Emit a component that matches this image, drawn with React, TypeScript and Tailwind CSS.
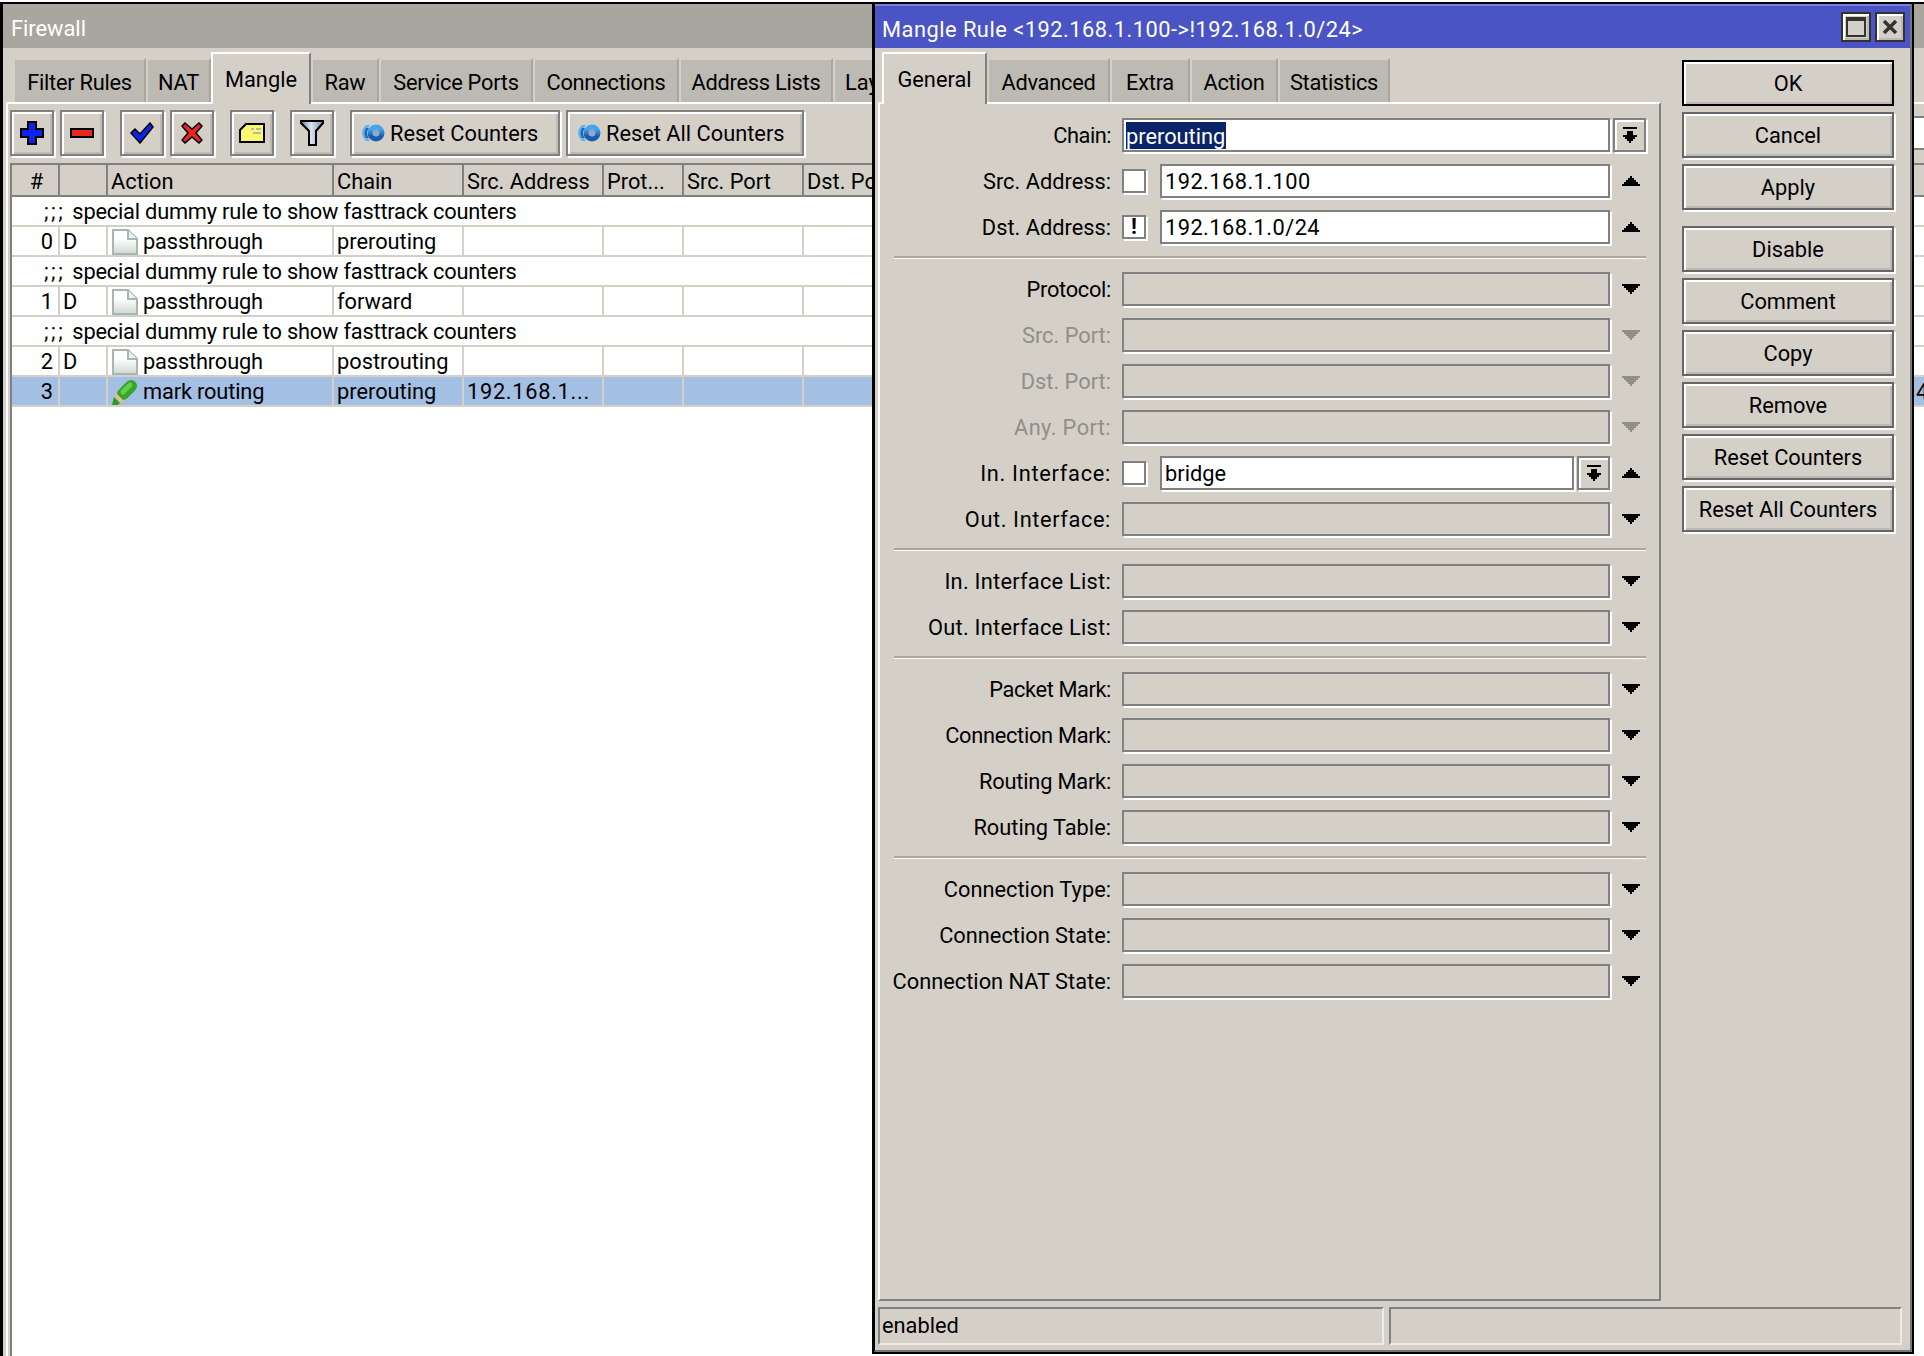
const arrowDown = "M0 0h18v2h-2v2h-2v2h-2v2h-2v2H8V8H6V6H4V4H2V2H0z";
const arrowUp = "M8 0h2v2h2v2h2v2h2v2h2v2H0V8h2V6h2V4h2V2h2z";

function Arrow({ up, muted }: { up?: boolean; muted?: boolean }) {
  return (
    <svg width="18" height="10" viewBox="0 0 18 10" className="block" fill={muted ? "#8f8f88" : "#000"}>
      <path d={up ? arrowUp : arrowDown} />
    </svg>
  );
}

function DropBtn() {
  return (
    <div className="flex h-[34px] w-[33px] items-center justify-center border-2 border-[#808080] shadow-[2px_2px_0_#fff,inset_2px_2px_0_#fff]">
      <svg width="14" height="16" viewBox="0 0 14 16" fill="#000">
        <path d="M0 0h14v2H0zM4 4h6v4h4v2h-2v2h-2v2H8v2H6v-2H4v-2H2v-2H0V8h4z" />
      </svg>
    </div>
  );
}

function ToolBtn({ className, children }: { className: string; children: React.ReactNode }) {
  return (
    <div className={"flex h-[46px] shrink-0 items-center border-2 border-[#808080] shadow-[2px_2px_0_#fff,inset_2px_2px_0_#fff,inset_-2px_-2px_0_#bdbab3] " + className}>
      {children}
    </div>
  );
}

function ResetIcon({ id }: { id: string }) {
  return (
    <svg width="26" height="18" viewBox="0 0 26 18" className="shrink-0">
      <defs>
        <linearGradient id={id} x1="0" y1="0" x2="0" y2="1">
          <stop offset="0.2" stopColor="#45a5ea" />
          <stop offset="0.75" stopColor="#1a5cab" />
        </linearGradient>
      </defs>
      <path d="M7 1Q-1 9 7 17h4Q4 9 11 1z" fill="#5fb4ee" />
      <path d="M7 4Q4 9 7 14h3Q6 9 10 4z" fill="#1f68b8" />
      <circle cx="17" cy="9" r="6" fill="#8fa8cf" stroke={`url(#${id})`} strokeWidth="5" />
    </svg>
  );
}

function DocIcon() {
  return (
    <svg width="26" height="26" viewBox="0 0 26 26" className="shrink-0">
      <defs>
        <linearGradient id="doc" x1="0" y1="0" x2="0" y2="1">
          <stop offset="0.35" stopColor="#ffffff" />
          <stop offset="1" stopColor="#cfd8d4" />
        </linearGradient>
      </defs>
      <path d="M1 1h15l9 9v15H1z" fill="url(#doc)" stroke="#a9b5b1" strokeWidth="2" />
      <path d="M16 1v9h9" fill="#eef2f0" stroke="#a9b5b1" strokeWidth="2" />
    </svg>
  );
}

function MarkerIcon() {
  return (
    <svg width="26" height="26" viewBox="0 0 26 26" className="shrink-0">
      <path d="M11 15L19 7" stroke="#35a625" strokeWidth="12" strokeLinecap="round" />
      <path d="M11 13L18 6" stroke="#62cf48" strokeWidth="5" strokeLinecap="round" />
      <path d="M4 14l8 8-3 2-7-7z" fill="#e3c08a" />
      <path d="M2 18l6 6-2 2H0z" fill="#2f9a22" />
    </svg>
  );
}

const tabs = [
  { label: "Filter Rules", w: "w-[133px]" },
  { label: "NAT", w: "w-[65px]" },
  { label: "Mangle", w: "w-[100px]", on: true },
  { label: "Raw", w: "w-[68px]" },
  { label: "Service Ports", w: "w-[154px]" },
  { label: "Connections", w: "w-[146px]" },
  { label: "Address Lists", w: "w-[154px]" },
];

const dlgTabs = [
  { label: "General", w: "w-[105px]", on: true },
  { label: "Advanced", w: "w-[123px]" },
  { label: "Extra", w: "w-[80px]" },
  { label: "Action", w: "w-[88px]" },
  { label: "Statistics", w: "w-[112px]" },
];

function Tab({ label, w, on }: { label: string; w: string; on?: boolean }) {
  if (on) {
    return (
      <div className={"relative z-10 -mb-[2px] flex h-[52px] shrink-0 items-start justify-center border-t-2 border-l-2 border-r-2 border-t-white border-l-white border-r-[#808080] bg-[#d4d0c8] pt-[15px] " + w}>
        {label}
      </div>
    );
  }
  return (
    <div className={"flex h-[44px] shrink-0 items-center justify-center overflow-hidden border-t-2 border-l-2 border-r-2 border-t-[#d4d0c8] border-l-[#d4d0c8] border-r-[#a9a6a0] bg-[#bdbab3] pt-[3px] tracking-[-0.25px] " + w}>
      <span className="whitespace-nowrap">{label}</span>
    </div>
  );
}

const cols = ["w-[48px]", "w-[48px]", "w-[226px]", "w-[130px]", "w-[140px]", "w-[80px]", "w-[120px]", "w-[120px]"];
const heads = ["#", "", "Action", "Chain", "Src. Address", "Prot...", "Src. Port", "Dst. Port"];

const rows = [
  { comment: true },
  { n: "0", d: "D", action: "passthrough", chain: "prerouting" },
  { comment: true },
  { n: "1", d: "D", action: "passthrough", chain: "forward" },
  { comment: true },
  { n: "2", d: "D", action: "passthrough", chain: "postrouting" },
  { n: "3", d: "", action: "mark routing", chain: "prerouting", src: "192.168.1...", sel: true },
];

function Row({ r }: { r: any }) {
  if (r.comment) {
    return (
      <div className="flex h-[30px] items-center whitespace-nowrap border-b-2 border-[#d4d0c8] pl-[32px] pt-[2px]">
        <span className="mr-[7px] tracking-[2.5px]">;;;</span>
        <span className="tracking-[-0.2px]">special dummy rule to show fasttrack counters</span>
      </div>
    );
  }
  const cell = "flex h-full shrink-0 items-center border-r-2 border-[#d4d0c8] px-[3px] pt-[2px] whitespace-nowrap";
  return (
    <div className={"flex h-[30px] items-center border-b-2 border-[#d4d0c8] " + (r.sel ? "bg-[#a3bfe4]" : "bg-white")}>
      <div className={cell + " justify-end pr-[5px] " + cols[0]}>{r.n}</div>
      <div className={cell + " " + cols[1]}>{r.d}</div>
      <div className={cell + " gap-[5px] pl-[4px] tracking-[-0.15px] " + cols[2]}>
        {r.sel ? <MarkerIcon /> : <DocIcon />}
        {r.action}
      </div>
      <div className={cell + " " + cols[3]}>{r.chain}</div>
      <div className={cell + " tracking-[0.7px] " + cols[4]}>{r.src}</div>
      <div className={cell + " " + cols[5]} />
      <div className={cell + " " + cols[6]} />
      <div className={cell + " " + cols[7]} />
      <div className="flex-1 pl-[992px] pt-[2px]">{r.sel ? "4" : ""}</div>
    </div>
  );
}

function Field({ label, muted, track, children }: { label: string; muted?: boolean; track?: string; children: React.ReactNode }) {
  return (
    <div className="mb-[12px] flex h-[34px] items-center">
      <div className={"w-[231px] shrink-0 whitespace-nowrap pt-[2px] text-right " + (muted ? "text-[#8f8f88] " : "") + (track || "")}>{label}</div>
      <div className="ml-[11px] flex h-full flex-1 items-center">{children}</div>
    </div>
  );
}

const box = "h-[34px] border-2 border-[#808080] shadow-[2px_2px_0_#fff]";

function EmptyField({ label, muted, track }: { label: string; muted?: boolean; track?: string }) {
  return (
    <Field label={label} muted={muted} track={track}>
      <div className={"w-[488px] " + box} />
      <div className="ml-[12px]">
        <Arrow muted={muted} />
      </div>
    </Field>
  );
}

function Sep() {
  return <div className="mb-[13px] ml-[14px] h-[3px] w-[752px] border-b border-white bg-[#a9a6a0]" />;
}

function Check({ mark }: { mark?: boolean }) {
  return (
    <div className="flex h-[24px] w-[24px] shrink-0 items-center justify-center border-2 border-[#808080] bg-white font-bold text-black shadow-[2px_2px_0_#fff]">
      {mark ? "!" : ""}
    </div>
  );
}

function SideBtn({ label, primary, className }: { label: string; primary?: boolean; className?: string }) {
  return (
    <div
      className={
        "flex h-[46px] w-[212px] items-center justify-center border-2 pt-[2px] " +
        (primary
          ? "border-black shadow-[inset_2px_2px_0_#fff,inset_-2px_-2px_0_#bdbab3] "
          : "border-[#666] shadow-[2px_2px_0_#fff,inset_2px_2px_0_#fff,inset_-2px_-2px_0_#bdbab3] ") +
        (className || "")
      }
    >
      {label}
    </div>
  );
}

function Dialog() {
  return (
    <div className="absolute left-[872px] top-[2px] h-[1352px] w-[1042px] border-x-2 border-t-2 border-b-2 border-black bg-[#d4d0c8]">
      <div className="flex h-full flex-col border-b-2 border-l border-r-2 border-b-[#777] border-l-black border-r-[#777]">
        <div className="flex h-[44px] shrink-0 items-center justify-between border-t-2 border-[#7a80dc] bg-[#4b54c5] pl-[7px] pr-[5px] text-white">
          <span className="pt-[6px] tracking-[0.5px]">{"Mangle Rule <192.168.1.100->!192.168.1.0/24>"}</span>
          <div className="flex gap-[4px]">
            <div className="flex h-[30px] w-[30px] items-center justify-center border-2 border-[#333] bg-[#d4d0c8] shadow-[inset_2px_2px_0_#fff,inset_-2px_-2px_0_#bdbab3]">
              <div className="h-[20px] w-[20px] border-2 border-t-4 border-[#333]" />
            </div>
            <div className="flex h-[30px] w-[30px] items-center justify-center border-2 border-[#333] bg-[#d4d0c8] shadow-[inset_2px_2px_0_#fff,inset_-2px_-2px_0_#bdbab3]">
              <svg width="14" height="14" viewBox="0 0 14 14" fill="none" stroke="#333" strokeWidth="3.5">
                <path d="M1 1l12 12M13 1L1 13" />
              </svg>
            </div>
          </div>
        </div>
        <div className="flex min-h-0 flex-1">
          <div className="ml-[3px] flex w-[783px] shrink-0 flex-col pt-[4px]">
            <div className="flex h-[50px] items-end pl-[4px]">
              {dlgTabs.map((t) => (
                <Tab key={t.label} {...t} />
              ))}
            </div>
            <div className="flex-1 border-t-2 border-l-2 border-r-2 border-b-2 border-t-white border-l-white border-r-[#808080] border-b-[#808080] pt-[14px]">
              <Field label="Chain:" track="tracking-[-0.5px]">
                <div className={"flex w-[488px] items-center bg-white pl-[2px] " + box}>
                  <span className="bg-[#0a246a] pr-[1px] pt-[3px] leading-[24px] text-white">prerouting</span>
                </div>
                <div className="ml-[3px]">
                  <DropBtn />
                </div>
              </Field>
              <Field label="Src. Address:">
                <Check />
                <div className={"ml-[14px] flex w-[450px] items-center bg-white pl-[3px] pt-[1px] tracking-[0.45px] " + box}>192.168.1.100</div>
                <div className="ml-[12px]">
                  <Arrow up />
                </div>
              </Field>
              <Field label="Dst. Address:">
                <Check mark />
                <div className={"ml-[14px] flex w-[450px] items-center bg-white pl-[3px] pt-[1px] tracking-[0.45px] " + box}>192.168.1.0/24</div>
                <div className="ml-[12px]">
                  <Arrow up />
                </div>
              </Field>
              <Sep />
              <EmptyField label="Protocol:" track="tracking-[-0.3px]" />
              <EmptyField label="Src. Port:" muted />
              <EmptyField label="Dst. Port:" muted />
              <EmptyField label="Any. Port:" muted track="tracking-[0.4px]" />
              <Field label="In. Interface:" track="tracking-[0.7px]">
                <Check />
                <div className={"ml-[14px] flex w-[414px] items-center bg-white pl-[3px] pt-[1px] " + box}>bridge</div>
                <div className="ml-[3px]">
                  <DropBtn />
                </div>
                <div className="ml-[12px]">
                  <Arrow up />
                </div>
              </Field>
              <EmptyField label="Out. Interface:" track="tracking-[0.6px]" />
              <Sep />
              <EmptyField label="In. Interface List:" track="tracking-[0.25px]" />
              <EmptyField label="Out. Interface List:" track="tracking-[0.25px]" />
              <Sep />
              <EmptyField label="Packet Mark:" track="tracking-[-0.4px]" />
              <EmptyField label="Connection Mark:" track="tracking-[-0.3px]" />
              <EmptyField label="Routing Mark:" track="tracking-[-0.2px]" />
              <EmptyField label="Routing Table:" />
              <Sep />
              <EmptyField label="Connection Type:" />
              <EmptyField label="Connection State:" />
              <EmptyField label="Connection NAT State:" />
            </div>
          </div>
          <div className="ml-[21px] flex flex-col gap-[6px] pt-[12px]">
            <SideBtn label="OK" primary />
            <SideBtn label="Cancel" />
            <SideBtn label="Apply" className="mb-[10px]" />
            <SideBtn label="Disable" />
            <SideBtn label="Comment" />
            <SideBtn label="Copy" />
            <SideBtn label="Remove" />
            <SideBtn label="Reset Counters" />
            <SideBtn label="Reset All Counters" />
          </div>
        </div>
        <div className="ml-[3px] mt-[6px] mb-[5px] flex h-[38px] shrink-0 gap-[5px]">
          <div className="flex w-[506px] items-center border-t-2 border-l-2 border-r-2 border-b-2 border-t-[#808080] border-l-[#808080] border-r-[#ecebe6] border-b-[#ecebe6] pl-[2px]">
            enabled
          </div>
          <div className="w-[513px] border-t-2 border-l-2 border-r-2 border-b-2 border-t-[#808080] border-l-[#808080] border-r-[#ecebe6] border-b-[#ecebe6]" />
        </div>
      </div>
    </div>
  );
}

export default function App() {
  return (
    <div
      className="relative h-[1356px] w-[1924px] overflow-hidden bg-white pt-[2px] text-[21.8px] leading-none text-black"
      style={{ fontFamily: "Roboto, 'Liberation Sans', sans-serif" }}
    >
      <div className="flex h-full flex-col border-l-[3px] border-t-2 border-black bg-[#d4d0c8]">
        <div className="flex h-[44px] shrink-0 items-center bg-[#a9a6a0] pl-[8px] pt-[6px] text-white">Firewall</div>
        <div className="flex h-[54px] shrink-0 items-end pl-[10px]">
          {tabs.map((t) => (
            <Tab key={t.label} {...t} />
          ))}
          <div className="flex h-[44px] w-[60px] shrink-0 items-center overflow-hidden border-t-2 border-l-2 border-t-[#d4d0c8] border-l-[#d4d0c8] bg-[#bdbab3] pl-[10px] pt-[3px]">
            Lay
          </div>
        </div>
        <div className="ml-[3px] flex min-h-0 flex-1 flex-col border-l-2 border-t-2 border-white pt-[6px]">
          <div className="flex h-[46px] shrink-0 items-center pl-[2px]">
            <ToolBtn className="w-[44px] justify-center">
              <svg width="24" height="24" viewBox="0 0 24 24">
                <path d="M8 1h8v7h7v8h-7v7H8v-7H1V8h7z" fill="#0a24e8" stroke="#000" strokeWidth="2" />
              </svg>
            </ToolBtn>
            <ToolBtn className="ml-[6px] w-[44px] justify-center">
              <svg width="24" height="10" viewBox="0 0 24 10">
                <path d="M1 1h22v8H1z" fill="#e8281e" stroke="#000" strokeWidth="2" />
              </svg>
            </ToolBtn>
            <ToolBtn className="ml-[16px] w-[44px] justify-center">
              <svg width="24" height="22" viewBox="0 0 24 22">
                <path d="M1 11l4-4 5 5L20 1l3 4L10 21z" fill="#0a24e8" stroke="#000" strokeWidth="1.5" />
              </svg>
            </ToolBtn>
            <ToolBtn className="ml-[6px] w-[44px] justify-center">
              <svg width="22" height="22" viewBox="0 0 22 22">
                <path d="M4 1l7 6 7-6 3 3-6 7 6 7-3 3-7-6-7 6-3-3 6-7-6-7z" fill="#e8281e" stroke="#000" strokeWidth="1.5" />
              </svg>
            </ToolBtn>
            <ToolBtn className="ml-[16px] w-[44px] justify-center">
              <svg width="26" height="20" viewBox="0 0 26 20">
                <path d="M7 1h18v18H1V7z" fill="#fbf870" stroke="#000" strokeWidth="2" />
                <path d="M12 6h3M17 6h5M14 10h8" stroke="#b9b9a0" strokeWidth="2" />
              </svg>
            </ToolBtn>
            <ToolBtn className="ml-[16px] w-[44px] justify-center">
              <svg width="24" height="26" viewBox="0 0 24 26">
                <defs>
                  <linearGradient id="fun" x1="0" y1="0" x2="1" y2="0">
                    <stop offset="0" stopColor="#6b7fae" />
                    <stop offset="0.45" stopColor="#dfe4f0" />
                    <stop offset="1" stopColor="#7c8bb3" />
                  </linearGradient>
                </defs>
                <path d="M1 1h22v2l-7 8v14H9V11L1 3z" fill="url(#fun)" stroke="#000" strokeWidth="2" />
              </svg>
            </ToolBtn>
            <ToolBtn className="ml-[16px] w-[210px] gap-[5px] pl-[7px]">
              <ResetIcon id="ring1" />
              <span className="pt-[2px]">Reset Counters</span>
            </ToolBtn>
            <ToolBtn className="ml-[6px] w-[238px] gap-[5px] pl-[7px]">
              <ResetIcon id="ring2" />
              <span className="pt-[2px]">Reset All Counters</span>
            </ToolBtn>
            <div className="ml-auto h-[34px] w-[10px] border-y-2 border-[#808080] bg-white" />
          </div>
          <div className="ml-[2px] mt-[7px] flex min-h-0 flex-1 flex-col border-l-2 border-[#808080] bg-white">
            <div className="flex h-[34px] shrink-0 border-y-2 border-[#808080] bg-[#d4d0c8]">
              {heads.map((h, i) => (
                <div
                  key={i}
                  className={
                    "flex shrink-0 items-center overflow-hidden whitespace-nowrap border-r-2 border-[#808080] pl-[3px] pt-[4px] " +
                    cols[i] +
                    (i === 0 ? " justify-center" : "")
                  }
                >
                  {h}
                </div>
              ))}
            </div>
            {rows.map((r, i) => (
              <Row key={i} r={r} />
            ))}
          </div>
        </div>
      </div>
      <Dialog />
    </div>
  );
}
